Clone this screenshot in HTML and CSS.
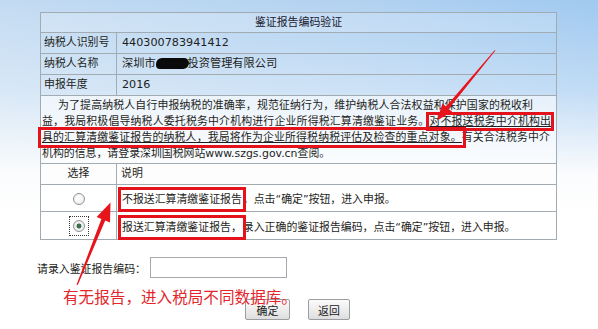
FILE: index.html
```html
<!DOCTYPE html>
<html lang="zh-CN">
<head>
<meta charset="utf-8">
<title>鉴证报告编码验证</title>
<link rel="stylesheet" href="styles.css">
</head>
<body>
<div class="page">
  <table class="form">
    <colgroup><col class="col-a"><col class="col-b"></colgroup>
    <tr><th colspan="2" class="title">鉴证报告编码验证</th></tr>
    <tr class="info"><td class="lbl">纳税人识别号</td><td class="val">440300783941412</td></tr>
    <tr class="info"><td class="lbl">纳税人名称</td><td class="val">深圳市<span class="redact"></span>投资管理有限公司</td></tr>
    <tr class="info"><td class="lbl">申报年度</td><td class="val">2016</td></tr>
    <tr>
      <td colspan="2" class="notice">
        <span class="ln ln1">为了提高纳税人自行申报纳税的准确率，规范征纳行为，维护纳税人合法权益和保护国家的税收利</span>
        <span class="ln ln2">益，我局积极倡导纳税人委托税务中介机构进行企业所得税汇算清缴鉴证业务。<span class="mark mark-a">对不报送税务中介机构出</span></span>
        <span class="ln ln3"><span class="mark mark-b">具的汇算清缴鉴证报告的纳税人，我局将作为企业所得税纳税评估及检查的重点对象。</span>有关合法税务中介</span>
        <span class="ln4">机构的信息，请登录深圳国税网站www.szgs.gov.cn查阅。</span>
      </td>
    </tr>
    <tr class="head"><td class="sel">选择</td><td class="desc">说明</td></tr>
    <tr class="opt opt1">
      <td class="sel"><input type="radio" name="rep" class="radio"></td>
      <td class="desc"><span class="mark mark-c">不报送汇算清缴鉴证报告</span>，点击“确定”按钮，进入申报。</td>
    </tr>
    <tr class="opt opt2">
      <td class="sel"><span class="focus"><input type="radio" name="rep" class="radio" checked></span></td>
      <td class="desc"><span class="mark mark-c">报送汇算清缴鉴证报告，</span>录入正确的鉴证报告编码，点击“确定”按钮，进入申报。</td>
    </tr>
  </table>

  <div class="code-row">
    <label class="code-label" for="code">请录入鉴证报告编码：</label>
    <input id="code" type="text" class="code-input">
  </div>
  <div class="btn-row">
    <button class="btn">确定</button>
    <button class="btn">返回</button>
  </div>

  <div class="note">有无报告，进入税局不同数据库。</div>

  <svg class="arrows" width="598" height="329" viewBox="0 0 598 329">
    <polygon fill="#e8141c" points="495.5,50.5 448.6,108.9 452.2,111.8 437,120.5 442.4,103.6 446.0,106.5 494.6,50.2"/>
    <polygon fill="#e8141c" points="77.8,285 105.2,220.6 110,222.5 110.5,202.5 96.6,216.9 101.4,219.1 76.6,284.6"/>
  </svg>
</div>
</body>
</html>
```

FILE: styles.css
```css
html, body {
  margin: 0;
  padding: 0;
}
body {
  width: 598px;
  height: 329px;
  overflow: hidden;
  font-family: "DejaVu Sans", "Noto Sans CJK SC", sans-serif;
  font-size: 10.9px;
  color: #1e1e22;
  background:
    linear-gradient(to bottom, rgba(255,255,255,0) 0px, rgba(255,255,255,0.35) 90px, #fbfcfd 175px, #ffffff 215px),
    linear-gradient(to right, #c3dbf2 0%, #b2d2f1 60%, #a0c9f0 100%);
}
.page {
  position: relative;
  width: 598px;
  height: 329px;
  box-sizing: border-box;
  padding: 12px 0 0 40px;
}
.form {
  width: 516px;
  border-collapse: collapse;
  border: 1px solid #99a2aa;
  table-layout: fixed;
}
.col-a {
  width: 76px;
}
.col-b {
  width: 440px;
}
.form td, .form th {
  border: 1px solid #a3abb2;
  padding: 0;
  font-weight: normal;
  white-space: nowrap;
  overflow: visible;
}
.title {
  height: 19px;
  text-align: center;
  color: #202030;
  background: rgba(255,255,255,0.18);
  line-height: 19px;
}
.info td {
  height: 20px;
  line-height: 20px;
}
.lbl {
  padding-left: 3px !important;
}
.val {
  padding-left: 5px !important;
  font-size: 11.2px;
}
.redact {
  display: inline-block;
  width: 33px;
  height: 11px;
  margin: 0 -1px -1px 0;
  background: #0a0a0a;
  border-radius: 6px 5px 6px 4px;
  vertical-align: -1px;
}
.notice {
  height: 64px;
  padding: 2px 0 1px 1px !important;
  line-height: 16px;
  background: rgba(255,255,255,0.55);
}
.ln {
  display: block;
  text-align: justify;
  text-align-last: justify;
}
.ln1 {
  width: 475px;
  margin-left: 16px;
}
.ln2 {
  width: 509px;
}
.ln3 {
  width: 508px;
}
.ln4 {
  display: block;
}
.mark {
  outline: 3px solid #e3121b;
}
.mark-a {
  text-decoration: underline;
  outline-offset: 0px;
}
.mark-b {
  text-decoration: underline;
  outline-offset: 1px;
}
.mark-c {
  padding: 3px 1px 3px 1px;
}
.head td {
  height: 20px;
  line-height: 20px;
  background: #fdfdfd;
}
.sel {
  text-align: center;
}
.desc {
  padding-left: 4px !important;
}
.opt td {
  background: #ffffff;
}
.opt1 td {
  height: 26px;
}
.opt2 td {
  height: 27px;
}
.radio {
  appearance: none;
  -webkit-appearance: none;
  width: 12px;
  height: 12px;
  margin: 0;
  border: 1px solid #8e9496;
  border-radius: 50%;
  background: radial-gradient(circle at 40% 40%, #ffffff 0%, #e6e8ea 100%);
  vertical-align: middle;
  box-sizing: border-box;
}
.radio:checked {
  background: radial-gradient(circle, #3f6f4a 0, #3f6f4a 2.2px, #f2f4f3 2.8px, #e4e6e8 100%);
}
.focus {
  display: inline-block;
  padding: 3px;
  outline: 1px dotted #3a3a3a;
  line-height: 0;
}
.code-row {
  display: flex;
  align-items: center;
  margin: 17px 0 0 -3px;
}
.code-label {
  width: 113px;
}
.code-input {
  width: 137px;
  height: 21px;
  box-sizing: border-box;
  margin: 0;
  border: 1px solid #a5a9ad;
  background: #ffffff;
}
.btn-row {
  display: flex;
  gap: 18px;
  margin: 21px 0 0 205px;
}
.btn {
  width: 45px;
  height: 21px;
  padding: 0;
  font-family: "DejaVu Sans", "Noto Sans CJK SC", sans-serif;
  font-size: 10.9px;
  color: #202020;
  border: 1px solid #9a9ea2;
  border-radius: 2px;
  background: linear-gradient(to bottom, #fbfbfb 0%, #ececec 55%, #dedede 100%);
}
.btn + .btn {
  width: 42px;
}
.note {
  position: absolute;
  left: 63px;
  top: 286px;
  font-family: "Noto Sans CJK SC", sans-serif;
  font-size: 15.6px;
  line-height: 20px;
  color: #e3262c;
}
.arrows {
  position: absolute;
  left: 0;
  top: 0;
  pointer-events: none;
}
```
